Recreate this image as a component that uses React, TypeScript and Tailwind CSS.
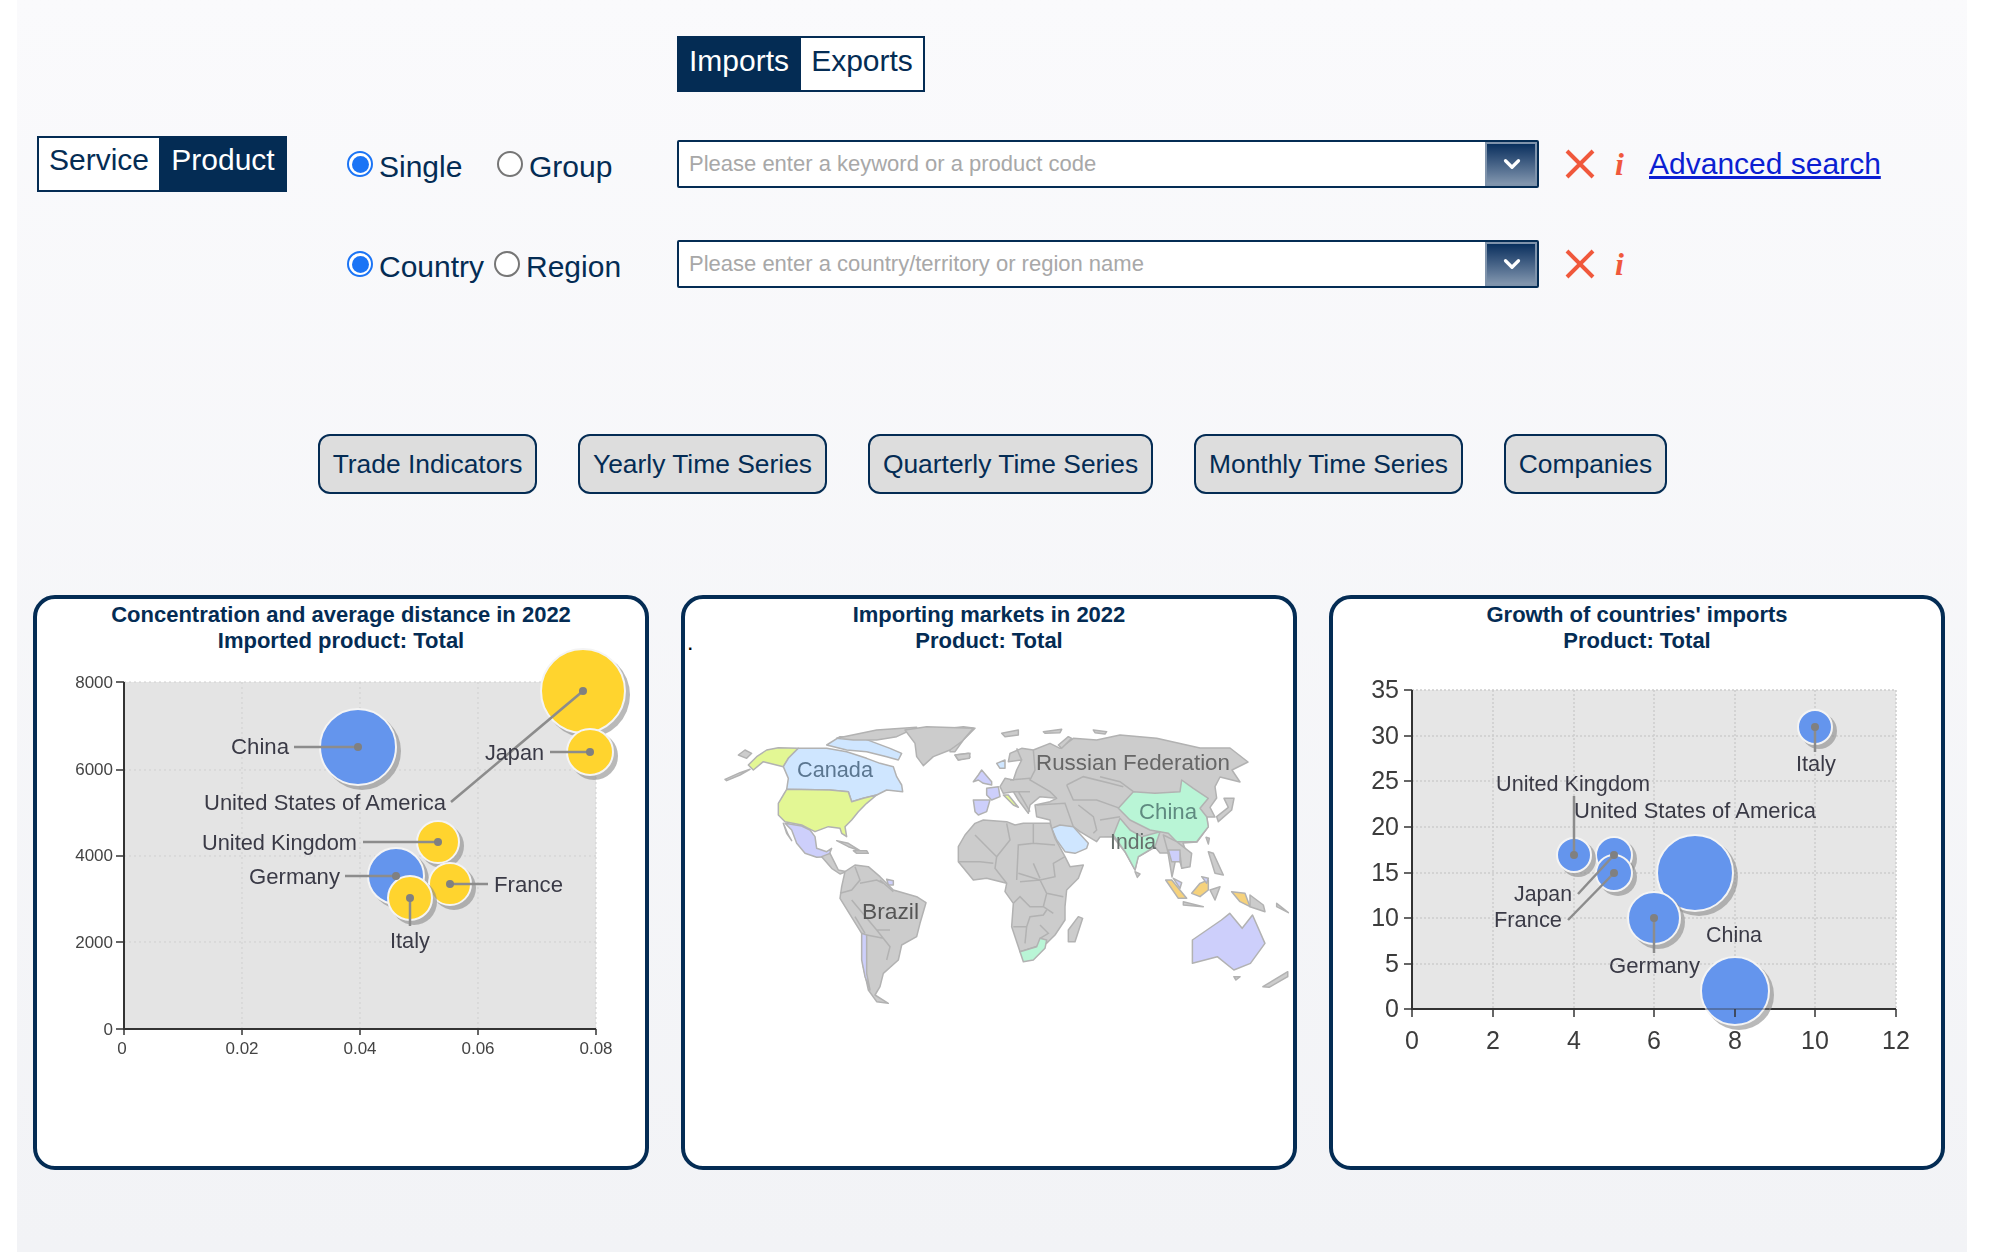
import {ChevronDown} from "lucide-react";

const NAVY = "#042c54";

interface RadioProps {
  label: string;
  checked?: boolean;
  width: string;
}

const Radio = ({label, checked, width}: RadioProps) => (
  <label className={`flex items-center gap-[6px] ${width}`}>
    {checked ? (
      <span className="w-[26px] h-[26px] rounded-full border-2 border-[#1b74f5] bg-white flex items-center justify-center shrink-0">
        <span className="w-[17px] h-[17px] rounded-full bg-[#1b74f5]" />
      </span>
    ) : (
      <span className="w-[26px] h-[26px] rounded-full border-2 border-[#767676] bg-white shrink-0" />
    )}
    <span className="text-[30px] leading-none pt-[5px] text-[#042c54]">{label}</span>
  </label>
);

const Cross = () => (
  <svg width="30" height="30" viewBox="0 0 30 30" className="shrink-0">
    <path d="M2 2 L28 28 M28 2 L2 28" stroke="#f0583c" strokeWidth="4" fill="none" />
  </svg>
);

const SearchBox = ({placeholder}: {placeholder: string}) => (
  <div className="w-[862px] h-[48px] border-2 border-[#042c54] rounded-[2px] bg-white flex">
    <input
      readOnly
      placeholder={placeholder}
      className="flex-1 min-w-0 pl-[10px] pb-[2px] text-[22px] outline-none bg-white placeholder:text-[#a8a8a8]"
    />
    <div className="w-[52px] pl-[2px] border-2 border-[#7f93ab] bg-gradient-to-b from-[#08305e] to-[#8296ae] flex items-center justify-center">
      <ChevronDown size={26} strokeWidth={3} color="#ffffff" />
    </div>
  </div>
);

const BUTTONS = [
  {label: "Trade Indicators", width: "w-[219px]"},
  {label: "Yearly Time Series", width: "w-[249px]"},
  {label: "Quarterly Time Series", width: "w-[285px]"},
  {label: "Monthly Time Series", width: "w-[269px]"},
  {label: "Companies", width: "w-[163px]"},
];

interface BubbleData {
  x: number;
  y: number;
  r: number;
  fill: string;
}

const BLUE = "#6495ed";
const YELLOW = "#ffd42e";

const Bubble = ({x, y, r, fill}: BubbleData) => (
  <g>
    <circle cx={x + 4} cy={y + 4} r={r + 1} fill="#8a8a8a" opacity="0.6" />
    <circle cx={x} cy={y} r={r} fill={fill} stroke="#f4f4f4" strokeWidth="2" />
  </g>
);

interface LabelData {
  text: string;
  x: number;
  y: number;
  w: number;
  color?: string;
}

const ChartLabel = ({text, x, y, w, color = "#3a3a46"}: LabelData) => (
  <text x={x} y={y} fontSize="22" fill={color} textLength={w} lengthAdjust="spacingAndGlyphs">
    {text}
  </text>
);

// leader line from the bubble centre out to its label
const Leader = ({d}: {d: [number, number, number, number]}) => (
  <g>
    <line x1={d[0]} y1={d[1]} x2={d[2]} y2={d[3]} stroke="#8c8c8c" strokeWidth="2.5" />
    <circle cx={d[0]} cy={d[1]} r="4" fill="#808080" />
  </g>
);

const CONCENTRATION_BUBBLES: BubbleData[] = [
  {x: 583, y: 691, r: 42, fill: YELLOW},
  {x: 590, y: 752, r: 23, fill: YELLOW},
  {x: 358, y: 747, r: 38, fill: BLUE},
  {x: 438, y: 842, r: 21, fill: YELLOW},
  {x: 396, y: 876, r: 28, fill: BLUE},
  {x: 450, y: 884, r: 21, fill: YELLOW},
  {x: 410, y: 898, r: 22, fill: YELLOW},
];

const CONCENTRATION_LABELS: LabelData[] = [
  {text: "China", x: 231, y: 754, w: 58},
  {text: "Japan", x: 485, y: 760, w: 59},
  {text: "United States of America", x: 204, y: 810, w: 242},
  {text: "United Kingdom", x: 202, y: 850, w: 155},
  {text: "Germany", x: 249, y: 884, w: 91},
  {text: "France", x: 494, y: 892, w: 69},
  {text: "Italy", x: 390, y: 948, w: 40},
];

const CONCENTRATION_LEADERS: [number, number, number, number][] = [
  [358, 747, 294, 747],
  [590, 752, 550, 752],
  [583, 691, 451, 802],
  [438, 842, 363, 842],
  [396, 876, 345, 876],
  [450, 884, 488, 884],
  [410, 898, 410, 926],
];

const ConcentrationChart = () => (
  <svg viewBox="37 655 608 510" className="w-[608px] h-[510px] overflow-visible blur-[0.4px]" fontFamily="'Liberation Sans', sans-serif">
    <rect x="124" y="682" width="472" height="347" fill="#e4e4e4" />
    {[242, 360, 478, 596].map(x => (
      <line key={x} x1={x} y1="682" x2={x} y2="1029" stroke="#cfcfcf" strokeDasharray="2 3" />
    ))}
    {[682, 770, 856, 942].map(y => (
      <line key={y} x1="124" y1={y} x2="596" y2={y} stroke="#cfcfcf" strokeDasharray="2 3" />
    ))}
    <path d="M124 682 V1029 H596" fill="none" stroke="#333333" strokeWidth="2" />
    {[124, 242, 360, 478, 596].map(x => (
      <line key={x} x1={x} y1="1029" x2={x} y2="1035" stroke="#333333" strokeWidth="1.5" />
    ))}
    {[682, 770, 856, 942, 1029].map(y => (
      <line key={y} x1="116" y1={y} x2="124" y2={y} stroke="#333333" strokeWidth="1.5" />
    ))}
    {[
      ["8000", 688],
      ["6000", 775],
      ["4000", 861],
      ["2000", 948],
      ["0", 1035],
    ].map(([t, y]) => (
      <text key={t} x="113" y={y} fontSize="17" fill="#444444" textAnchor="end">{t}</text>
    ))}
    {[
      ["0", 122],
      ["0.02", 242],
      ["0.04", 360],
      ["0.06", 478],
      ["0.08", 596],
    ].map(([t, x]) => (
      <text key={t} x={x} y="1054" fontSize="17" fill="#444444" textAnchor="middle">{t}</text>
    ))}
    {CONCENTRATION_BUBBLES.map(b => <Bubble key={`${b.x}-${b.y}`} {...b} />)}
    {CONCENTRATION_LEADERS.map(d => <Leader key={d.join()} d={d} />)}
    {CONCENTRATION_LABELS.map(l => <ChartLabel key={l.text} {...l} />)}
  </svg>
);

const GRAY = "#cccccc";
const LAVENDER = "#cdcffb";
const SKY = "#cfe6ff";
const MINT = "#b9f5d6";
const LIME = "#e3f794";
const AMBER = "#f6d27c";

interface MapLayerData {
  origin: [number, number];
  scale: [number, number];
  shapes: [string, string][];
  borders?: string;
}

// each layer keeps the coordinates of the enlargement it was traced from
const MAP_LAYERS: MapLayerData[] = [
  {
    origin: [950, 720],
    scale: [1 / 3, 1 / 3],
    shapes: [
      ["175,125 180,100 215,85 250,90 300,70 330,85 370,55 440,60 510,45 620,55 750,84 840,84 894,126 846,150 870,186 810,171 795,200 800,234 780,262 795,291 771,291 774,321 741,366 699,369 720,429 696,444 681,399 666,471 654,399 630,399 615,381 564,411 555,450 525,396 489,350 450,351 440,365 390,335 370,320 330,320 305,330 300,300 260,290 255,255 300,245 320,235 270,230 240,255 235,280 205,240 190,215 160,220 150,200 165,175 190,180 200,150 215,120", GRAY],
      ["140,130 165,120 165,145 150,145", SKY],
      ["70,185 85,165 95,150 125,185 125,195 100,190 85,180", LAVENDER],
      ["110,205 145,200 150,230 125,240 110,225", LAVENDER],
      ["70,240 120,240 110,275 85,285 75,275", LAVENDER],
      ["160,225 175,225 205,262 190,255", LIME],
      ["305,325 330,315 370,320 415,370 410,385 375,400 345,395 320,360", SKY],
      ["0,25 40,20 75,25 40,60 15,95 0,95", GRAY],
      ["15,105 55,100 60,112 25,120", GRAY],
      ["155,40 205,30 205,45 165,50", GRAY],
      ["280,35 335,28 330,38 285,40", GRAY],
      ["325,75 355,50 365,55 335,85", GRAY],
      ["430,30 470,35 465,42 435,38", GRAY],
    ],
    borders: "M250 90 L255 150 L240 180 L300 215 L320 235 M350 195 L400 170 L480 190 L520 200 M350 195 L370 240 L440 240 L510 265 M385 255 L430 290 L440 330 L430 340 M450 300 L510 290 M260 255 L345 250 L370 320 M190 215 L240 215 M180 180 L240 175 M205 215 L240 275 M215 120 L200 85",
  },
  {
    origin: [720, 720],
    scale: [1 / 3, 1 / 3],
    shapes: [
      ["55,105 75,90 95,100 80,115", GRAY],
      ["15,178 60,158 90,148 60,165 20,182", GRAY],
      ["85,135 110,110 140,90 175,83 235,85 205,115 190,140 130,125 100,150", LIME],
      ["320,75 360,50 430,55 470,70 510,85 545,100 535,120 500,110 440,95 380,90", SKY],
      ["350,55 470,30 590,22 530,50 470,60 400,60", GRAY],
      ["235,85 320,85 380,95 440,115 480,130 520,140 530,170 545,195 548,215 500,210 470,225 430,235 395,245 385,215 330,210 200,208 205,175 190,140 205,115", SKY],
      ["555,30 620,20 760,25 725,65 690,90 640,110 610,137 590,110 585,70", GRAY],
      ["705,105 750,100 748,115 715,120", GRAY],
      ["200,208 330,210 385,215 395,245 430,235 470,225 440,250 415,275 395,300 375,320 380,350 365,340 360,325 325,320 285,335 265,325 245,315 195,305 175,285 175,250 190,225", LIME],
      ["190,310 205,345 215,362 200,340", GRAY],
      ["195,310 245,318 270,330 285,350 290,385 320,395 335,385 325,410 290,412 255,400 230,370 215,330", LAVENDER],
      ["305,410 330,400 345,430 355,450 380,455 360,462 335,445", GRAY],
      ["350,362 385,370 420,392 385,380", GRAY],
      ["400,392 440,392 445,400 410,400", GRAY],
      ["375,455 405,435 445,440 480,470 520,510 590,530 618,548 600,610 590,650 545,675 535,720 490,760 480,800 465,825 505,850 470,845 445,810 430,740 425,640 360,535 365,500", GRAY],
      ["425,640 440,645 440,760 450,810 435,770 425,720", LAVENDER],
      ["500,478 520,482 520,495 505,495", LAVENDER],
    ],
    borders: "M405 440 L420 480 L395 510 L360 520 M420 490 L470 480 L490 490 M395 540 L470 630 L510 680 L500 720 M470 630 L510 630 M520 515 L480 480 M440 645 L490 655 M435 640 L405 590",
  },
  {
    origin: [940, 820],
    scale: [1 / 3, 1 / 3],
    shapes: [
      ["55,80 75,45 105,10 130,0 200,5 225,15 250,10 330,10 345,55 375,110 390,140 430,135 415,175 380,210 375,260 375,300 345,345 320,370 240,395 215,320 220,250 195,215 200,190 140,175 100,180 55,125", GRAY],
      ["240,395 290,380 300,355 320,360 315,385 280,420 250,425", MINT],
      ["415,290 428,295 405,365 385,365 385,330", GRAY],
    ],
    borders: "M105 45 L170 110 L165 145 L200 190 M200 10 L210 60 L170 110 M280 10 L280 70 L235 75 L230 180 M280 70 L345 75 M280 130 L300 175 M235 160 L300 180 L345 170 L340 130 L375 110 M55 125 L120 125 L160 130 M240 185 L300 180 L320 220 L310 260 L270 260 L240 230 L220 250 M220 320 L260 320 L270 290 L310 285 L320 270 M320 220 L370 230 M310 260 L340 280 M260 320 L255 370 M300 315 L325 340 L300 355",
  },
  {
    origin: [1100, 720],
    scale: [1 / 3, 1 / 3],
    shapes: [
      ["55,265 100,215 165,220 240,215 245,180 280,205 325,235 300,265 320,290 325,320 290,365 230,365 205,340 150,330 90,300", MINT],
      ["60,295 90,330 125,350 180,335 165,380 115,410 105,450 75,395 40,345", MINT],
      ["105,455 120,462 112,472", GRAY],
      ["190,345 230,365 275,400 270,440 245,445 240,400 205,400", GRAY],
      ["205,390 240,390 240,425 215,425", LAVENDER],
      ["325,395 340,400 370,465 345,460", GRAY],
      ["355,305 395,270 402,235 372,235 385,262 350,290", GRAY],
      ["318,352 328,355 325,372", GRAY],
      ["220,475 245,488 240,505", LAVENDER],
      ["197,480 215,480 260,535 235,535", AMBER],
      ["250,545 310,560 250,555", GRAY],
      ["275,520 300,490 325,480 325,510 300,530", AMBER],
      ["305,470 325,475 320,490", LAVENDER],
      ["330,510 360,500 345,540", GRAY],
      ["395,515 435,520 450,560 420,545", AMBER],
      ["450,525 490,555 495,575 450,560", GRAY],
      ["530,550 565,578 530,560", GRAY],
    ],
    borders: "M0 170 L60 185 L100 215",
  },
  {
    origin: [670, 580],
    scale: [0.4146, 1 / 3],
    shapes: [
      ["1260,1080 1330,1020 1350,1000 1380,1045 1405,1005 1435,1090 1400,1150 1360,1170 1320,1130 1260,1150", LAVENDER],
      ["1360,1190 1375,1190 1365,1200", GRAY],
      ["1430,1220 1490,1175 1490,1190 1445,1222", GRAY],
    ],
  },
];

const MAP_LABELS: LabelData[] = [
  {text: "Canada", x: 797, y: 777, w: 76, color: "#5b7690"},
  {text: "Russian Federation", x: 1036, y: 770, w: 194, color: "#666666"},
  {text: "China", x: 1139, y: 819, w: 58, color: "#5f8a80"},
  {text: "India", x: 1110, y: 849, w: 46, color: "#666f6c"},
  {text: "Brazil", x: 862, y: 919, w: 57, color: "#555555"},
];

const MarketsMap = () => (
  <svg viewBox="685 655 608 510" className="w-[608px] h-[510px] overflow-visible blur-[0.7px]" fontFamily="'Liberation Sans', sans-serif">
    {MAP_LAYERS.map(layer => (
      <g key={layer.origin.join()} transform={`translate(${layer.origin[0]} ${layer.origin[1]}) scale(${layer.scale[0]} ${layer.scale[1]})`}>
        {layer.shapes.map(([points, fill]) => (
          <polygon key={points} points={points} fill={fill} stroke="#b2b2b2" strokeWidth="1.5" vectorEffect="non-scaling-stroke" strokeLinejoin="round" />
        ))}
        {layer.borders && (
          <path d={layer.borders} fill="none" stroke="#b2b2b2" strokeWidth="1.5" vectorEffect="non-scaling-stroke" />
        )}
      </g>
    ))}
    {MAP_LABELS.map(l => <ChartLabel key={l.text} {...l} />)}
  </svg>
);

const GROWTH_BUBBLES: BubbleData[] = [
  {x: 1815, y: 727, r: 17, fill: BLUE},
  {x: 1614, y: 855, r: 18, fill: BLUE},
  {x: 1574, y: 855, r: 17, fill: BLUE},
  {x: 1614, y: 873, r: 18, fill: BLUE},
  {x: 1695, y: 873, r: 38, fill: BLUE},
  {x: 1654, y: 918, r: 26, fill: BLUE},
  {x: 1735, y: 991, r: 34, fill: BLUE},
];

const GROWTH_LABELS: LabelData[] = [
  {text: "United Kingdom", x: 1496, y: 791, w: 154},
  {text: "United States of America", x: 1574, y: 818, w: 242},
  {text: "Italy", x: 1796, y: 771, w: 40},
  {text: "Japan", x: 1514, y: 901, w: 58},
  {text: "France", x: 1494, y: 927, w: 68},
  {text: "China", x: 1706, y: 942, w: 56},
  {text: "Germany", x: 1609, y: 973, w: 91},
];

const GROWTH_LEADERS: [number, number, number, number][] = [
  [1815, 727, 1815, 752],
  [1574, 855, 1574, 796],
  [1614, 855, 1578, 894],
  [1614, 873, 1568, 920],
  [1654, 918, 1654, 953],
];

const GROWTH_X = [1412, 1493, 1574, 1654, 1735, 1815, 1896];
const GROWTH_Y = [690, 736, 781, 827, 873, 918, 964, 1009];

const GrowthChart = () => (
  <svg viewBox="1333 655 608 510" className="w-[608px] h-[510px] overflow-visible blur-[0.4px]" fontFamily="'Liberation Sans', sans-serif">
    <rect x="1412" y="690" width="484" height="319" fill="#e6e6e6" />
    {GROWTH_X.slice(1).map(x => (
      <line key={x} x1={x} y1="690" x2={x} y2="1009" stroke="#cdcdcd" strokeWidth="1.5" strokeDasharray="2 2" />
    ))}
    {GROWTH_Y.slice(0, -1).map(y => (
      <line key={y} x1="1412" y1={y} x2="1896" y2={y} stroke="#cdcdcd" strokeWidth="1.5" strokeDasharray="2 2" />
    ))}
    <path d="M1412 690 V1009 H1896" fill="none" stroke="#333333" strokeWidth="2" />
    {GROWTH_BUBBLES.map(b => <Bubble key={`${b.x}-${b.y}`} {...b} />)}
    <line x1="1701" y1="1009" x2="1769" y2="1009" stroke="#333333" strokeWidth="2" opacity="0.35" />
    {GROWTH_X.map(x => (
      <line key={x} x1={x} y1="1009" x2={x} y2="1017" stroke="#333333" strokeWidth="1.5" />
    ))}
    {GROWTH_Y.map(y => (
      <line key={y} x1="1404" y1={y} x2="1412" y2={y} stroke="#333333" strokeWidth="1.5" />
    ))}
    {GROWTH_Y.map((y, i) => (
      <text key={y} x="1399" y={y + 8} fontSize="25" fill="#3c3c3c" textAnchor="end">{35 - i * 5}</text>
    ))}
    {GROWTH_X.map((x, i) => (
      <text key={x} x={x} y="1049" fontSize="25" fill="#3c3c3c" textAnchor="middle">{i * 2}</text>
    ))}
    {GROWTH_LEADERS.map(d => <Leader key={d.join()} d={d} />)}
    {GROWTH_LABELS.map(l => <ChartLabel key={l.text} {...l} />)}
  </svg>
);

const Card = ({title, children}: {title: string[]; children: React.ReactNode}) => (
  <div className="relative w-[616px] h-[575px] border-4 border-[#042c54] rounded-[22px] bg-white">
    <div className="h-[56px] pt-[3px] text-center text-[22px] leading-[26px] font-bold text-[#042c54]">
      {title.map(line => <div key={line}>{line}</div>)}
    </div>
    {children}
  </div>
);

export default function App() {
  return (
    <div className="w-[2010px] h-[1252px] bg-white overflow-hidden" style={{fontFamily: "'Liberation Sans', Arial, sans-serif", color: NAVY}}>
      <div className="ml-[17px] w-[1950px] h-[1252px] bg-gradient-to-b from-[#fafafc] to-[#f2f3f6] pt-[36px]">
        <div className="ml-[660px] w-[248px] h-[56px] border-2 border-[#042c54] flex text-[30px] leading-[46px] bg-white">
          <div className="w-[122px] bg-[#042c54] text-white text-center pr-[2px]">Imports</div>
          <div className="flex-1 text-center">Exports</div>
        </div>

        <div className="mt-[48px] h-[48px] flex items-center">
          <div className="ml-[20px] w-[250px] h-[56px] border-2 border-[#042c54] flex text-[30px] leading-[43px] bg-white">
            <div className="w-[120px] text-center">Service</div>
            <div className="flex-1 bg-[#042c54] text-white text-center pl-[2px]">Product</div>
          </div>
          <div className="ml-[60px] w-[330px] flex">
            <Radio label="Single" checked width="w-[150px]" />
            <Radio label="Group" width="w-[150px]" />
          </div>
          <SearchBox placeholder="Please enter a keyword or a product code" />
          <div className="ml-[26px] flex items-center">
            <Cross />
            <span className="ml-[20px] w-[12px] text-[32px] font-bold italic text-[#f0583c]" style={{fontFamily: "'Liberation Serif', serif"}}>i</span>
            <a href="#" className="ml-[22px] text-[30px] leading-none text-[#0b1fd2] underline">Advanced search</a>
          </div>
        </div>

        <div className="mt-[52px] h-[48px] flex items-center">
          <div className="ml-[330px] w-[330px] flex">
            <Radio label="Country" checked width="w-[147px]" />
            <Radio label="Region" width="w-[150px]" />
          </div>
          <SearchBox placeholder="Please enter a country/territory or region name" />
          <div className="ml-[26px] flex items-center">
            <Cross />
            <span className="ml-[20px] w-[12px] text-[32px] font-bold italic text-[#f0583c]" style={{fontFamily: "'Liberation Serif', serif"}}>i</span>
          </div>
        </div>

        <div className="mt-[146px] ml-[301px] flex gap-[41px]">
          {BUTTONS.map(b => (
            <div key={b.label} className={`${b.width} h-[60px] pt-[2px] border-2 border-[#042c54] rounded-[12px] bg-[#dddddd] flex items-center justify-center text-[26.4px]`}>
              {b.label}
            </div>
          ))}
        </div>

        <div className="mt-[101px] ml-[16px] flex gap-[32px]">
          <Card title={["Concentration and average distance in 2022", "Imported product: Total"]}>
            <ConcentrationChart />
          </Card>
          <Card title={["Importing markets in 2022", "Product: Total"]}>
            <span className="absolute left-[3px] top-[38px] text-[16px] leading-none font-bold text-black">.</span>
            <MarketsMap />
          </Card>
          <Card title={["Growth of countries' imports", "Product: Total"]}>
            <GrowthChart />
          </Card>
        </div>
      </div>
    </div>
  );
}
